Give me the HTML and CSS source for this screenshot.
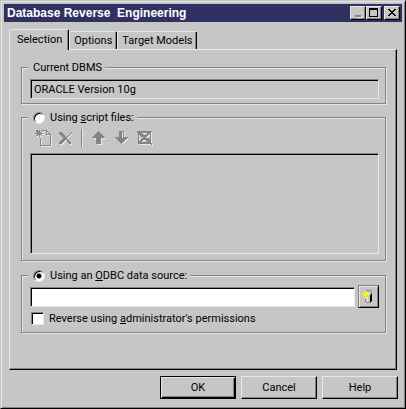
FILE: index.html
```html
<!DOCTYPE html>
<html lang="en">
<head>
    <meta charset="UTF-8">
    <meta name="viewport" content="width=device-width, initial-scale=1.0">
    <title>Database Reverse Engineering</title>
    <link rel="stylesheet" href="styles.css">
</head>
<body>
    <form class="window">
        <header class="titlebar">
            <h1>Database Reverse  Engineering</h1>
            <button type="button" class="caption" aria-label="Minimize">
                <svg width="12" height="10" shape-rendering="crispEdges"><path fill="#e7e7e7" d="M4 8h6v2H4z"/><path fill="#848484" d="M3 7h6v2H3z"/></svg>
            </button>
            <button type="button" class="caption" aria-label="Maximize">
                <svg width="12" height="10" shape-rendering="crispEdges"><path fill="#000" fill-rule="evenodd" d="M1 0h9v9H1zM2 2v6h7V2z"/></svg>
            </button>
            <button type="button" class="caption close" aria-label="Close">
                <svg width="12" height="10" shape-rendering="crispEdges"><path fill="#000" d="M2 1h2v1h1v1h2V2h1V1h2v1H9v1H8v1H7v1h1v1h1v1h1v1H8V7H7V6H5v1H4v1H2V7h1V6h1V5h1V4H4V3H3V2H2z"/></svg>
            </button>
        </header>

        <nav class="tabs" role="tablist">
            <button type="button" class="tab active" role="tab" aria-selected="true">Selection</button>
            <button type="button" class="tab" role="tab">Options</button>
            <button type="button" class="tab" role="tab">Target Models</button>
        </nav>

        <main class="panel">
            <fieldset>
                <legend><label for="dbms">Current DBMS</label></legend>
                <input type="text" id="dbms" class="field readonly" value="ORACLE Version 10g" readonly>
            </fieldset>

            <fieldset class="scripts">
                <legend>
                    <input type="radio" name="source" id="useScript">
                    <label for="useScript">Using <u>s</u>cript files:</label>
                </legend>
                <div class="toolbar">
                    <button type="button" disabled aria-label="New">
                        <svg width="18" height="18" shape-rendering="crispEdges"><path d="M1 1h2v1h1V1h1v2h1V2h1V1h1v1H7v1H6v1h2v1H6v1h1v1H6V6H5v2H4V6H3v1H1V6h1V5H0V4h2V3H1z"/><path fill-rule="evenodd" d="M8 1h4v1h1v1h1v1h1v1h1v12H5V9h1v7h9V6h-4V2H8zM12 3v2h2V4h-1V3z"/></svg>
                    </button>
                    <button type="button" disabled aria-label="Delete">
                        <svg width="18" height="18" shape-rendering="crispEdges"><path d="M1 3h3v1h1v1h1v1h1v1h1v1h1V7h1V6h1V5h1V4h1V3h1v1h-1v1h-1v1h-1v1h-1v1h-1v2h1v1h1v1h1v1h1v2h-2v-1h-1v-1h-1v-1H9v-1H7v1H6v1H5v1H4v1H1v-2h1v-1h1v-1h1v-1h1v-1h1V9H5V8H4V7H3V6H2V5H1z"/></svg>
                    </button>
                    <span class="separator"></span>
                    <button type="button" disabled aria-label="Move up">
                        <svg width="18" height="18" shape-rendering="crispEdges"><path d="M7 2h1v1h1v1h1v1h1v1h1v1h1v1h1v1h-4v6H5V9H1V8h1V7h1V6h1V5h1V4h1V3h1z"/></svg>
                    </button>
                    <button type="button" disabled aria-label="Move down">
                        <svg width="18" height="18" shape-rendering="crispEdges"><path fill-rule="evenodd" d="M5 2h5v6h4v1h-1v1h-1v1h-1v1h-1v1H9v1H8v1H7v-1H6v-1H5v-1H4v-1H3v-1H2V9H1V8h4zM8 3v6h1V3z"/></svg>
                    </button>
                    <button type="button" disabled aria-label="Clear all">
                        <svg width="18" height="18" shape-rendering="crispEdges"><path fill-rule="evenodd" d="M0 2h15v1h-1v11h1v2h-1v-1H1V4H0zM2 6v6h1v-1h1v-1h1V9h1V8H4V7H3V6zM5 4v1h2v1h2V5h1V4zM12 5v1h-1v1h-1v1H9v1h3v1h1V5zM5 12v1h5v-1H9v-1H6v1z"/></svg>
                    </button>
                </div>
                <div class="field list" tabindex="0" aria-label="Script files"></div>
            </fieldset>

            <fieldset class="odbc">
                <legend>
                    <input type="radio" name="source" id="useOdbc" checked>
                    <label for="useOdbc">Using an <u>O</u>DBC data source:</label>
                </legend>
                <div class="source">
                    <input type="text" class="field" aria-label="ODBC data source">
                    <button type="button" class="connect" aria-label="Connect to a data source">
                        <svg width="15" height="18" shape-rendering="crispEdges">
                            <path fill="#848484" d="M5 2h5v1h1v11h-1v1H5v-1H4V3h1z"/>
                            <path fill="#c6c6c6" d="M5 3h5v3H5zM5 7h4v7H5z"/>
                            <path fill="#e7e7e7" d="M6 8h1v6H6z"/>
                            <path fill="#000" d="M9 7h1V6h1v7h-1v1H9z"/>
                            <path fill="#ff0" d="M4 3h1v2h3v1h1v1H6v1H5v3H4V8H3V7H1V6h2V5h1z"/>
                            <path fill="#ff0" d="M2 4h1v1H2zM6 4h1v1H6zM2 8h1v1H2zM6 8h1v1H6z"/>
                        </svg>
                    </button>
                </div>
                <div class="check">
                    <input type="checkbox" id="admin">
                    <label for="admin">Reverse using <u>a</u>dministrator's permissions</label>
                </div>
            </fieldset>
        </main>

        <footer class="actions">
            <button type="submit" class="default">OK</button>
            <button type="button">Cancel</button>
            <button type="button">Help</button>
        </footer>
    </form>
</body>
</html>
```
FILE: styles.css
```css
:root {
    --face: #c6c6c6;
    --light: #e7e7e7;
    --dark: #848484;
}

* {
    box-sizing: border-box;
}

body {
    margin: 0;
    background: var(--face);
}

body, button, input {
    font-family: Roboto, sans-serif;
    font-size: 11px;
    line-height: 15px;
    color: #000;
}

button {
    padding: 0;
    background: var(--face);
    border: 1px solid;
    border-color: var(--light) #000 #000 var(--light);
    border-radius: 0;
    box-shadow: inset -1px -1px var(--dark);
}

.window {
    display: flex;
    flex-direction: column;
    min-height: 100vh;
    padding: 3px;
    border: 1px solid;
    border-color: var(--face) #000 #000 var(--face);
    box-shadow: inset 1px 1px var(--light), inset -1px -1px var(--dark);
}

/* title bar */
.titlebar {
    display: flex;
    align-items: center;
    height: 18px;
    padding: 0 2px 0 3px;
    background: #313063;
}

.titlebar h1 {
    flex: 1;
    margin: 0;
    font-family: "Liberation Sans", Arial, sans-serif;
    font-size: 12px;
    line-height: 18px;
    color: #fff;
    white-space: pre;
}

.caption {
    width: 16px;
    height: 14px;
}

.caption svg {
    display: block;
    margin: 1px;
}

.close {
    margin-left: 2px;
}

/* tabs */
.tabs {
    display: flex;
    align-items: flex-end;
    padding: 7px 5px 0;
}

.tab {
    height: 18px;
    padding: 0 4px;
    border-bottom: none;
    border-radius: 2px 2px 0 0;
    box-shadow: inset -1px 0 var(--dark);
}

.tab.active {
    position: relative;
    height: 21px;
    margin-bottom: -1px;
    padding: 0 6px 2px 7px;
}

.panel {
    flex: 1;
    margin: 0 5px;
    padding: 10px 9px 34px 11px;
    border: 1px solid;
    border-color: var(--light) #000 #000 var(--light);
    box-shadow: inset -1px -1px var(--dark);
}

/* etched group boxes */
fieldset {
    min-width: 0;
    margin: 0 1px 0 0;
    padding: 4px 6px 4px 8px;
    border: 1px solid var(--dark);
    box-shadow: 1px 1px var(--light), inset 1px 1px var(--light);
}

legend {
    display: flex;
    align-items: center;
    height: 15px;
    margin-left: -2px;
    padding: 0 3px 0 5px;
    background: var(--face);
}

.scripts {
    margin-top: 6px;
    padding-bottom: 6px;
}

.odbc {
    margin-top: 7px;
    padding-top: 2px;
    padding-bottom: 7px;
}

.field {
    display: block;
    width: 100%;
    height: 20px;
    padding: 0 3px;
    background: #fff;
    border: 1px solid;
    border-color: var(--dark) var(--light) var(--light) var(--dark);
    border-radius: 0;
    box-shadow: inset 1px 1px #000;
    outline: none;
}

.readonly, .list {
    background: var(--face);
}

.list {
    height: 101px;
}

.toolbar {
    display: flex;
    align-items: center;
    gap: 5px;
    padding: 0 0 6px 5px;
}

.toolbar button {
    height: 18px;
    border: none;
    box-shadow: none;
}

.toolbar svg {
    display: block;
    fill: var(--dark);
    filter: drop-shadow(1px 1px 0 var(--light));
}

.separator {
    width: 2px;
    height: 18px;
    margin-right: 3px;
    border-left: 1px solid var(--dark);
    border-right: 1px solid var(--light);
}

input[type="radio"], input[type="checkbox"] {
    appearance: none;
    flex: none;
    margin: 0;
    background: #fff;
    border: 1px solid;
    border-color: var(--dark) var(--light) var(--light) var(--dark);
    box-shadow: inset 1px 1px #000;
}

input[type="radio"] {
    width: 12px;
    height: 12px;
    margin-right: 5px;
    border-radius: 50%;
}

input[type="radio"]:checked {
    background: radial-gradient(circle, #000 2px, #fff 3px);
}

input[type="checkbox"] {
    width: 13px;
    height: 13px;
}

.source {
    display: flex;
    align-items: center;
    gap: 3px;
}

.source .field {
    flex: 1;
    min-width: 0;
}

.connect {
    width: 21px;
    height: 23px;
    border-color: var(--dark) #000 #000 var(--dark);
    box-shadow: inset 1px 1px var(--light), inset -1px -1px var(--dark);
}

.connect svg {
    display: block;
    margin: 1px 2px;
}

.check {
    display: flex;
    align-items: center;
    gap: 5px;
    height: 13px;
    margin-top: 4px;
    padding-left: 1px;
}

/* bottom buttons */
.actions {
    display: flex;
    justify-content: flex-end;
    gap: 5px;
    padding: 6px 4px 6px 0;
}

.actions button {
    width: 76px;
    height: 23px;
}

.actions .default {
    border-color: #000;
    box-shadow: inset 1px 1px var(--light), inset -1px -1px #000, inset -2px -2px var(--dark);
}
```
